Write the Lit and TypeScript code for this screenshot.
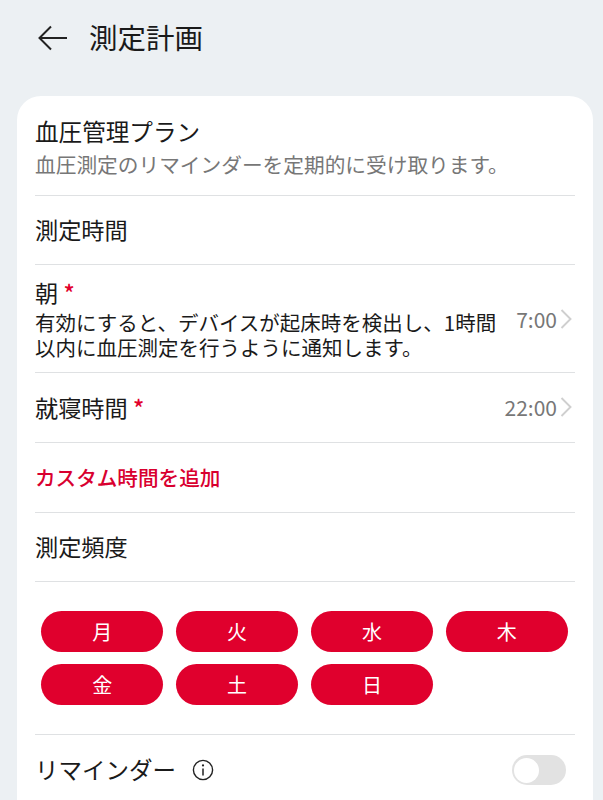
import { LitElement, html, css } from "lit";
import { customElement } from "lit/decorators.js";

const chevron = html`<svg class="chev" viewBox="0 0 12 20" aria-hidden="true"><path d="M1.5 1 L10.5 10 L1.5 19" fill="none" stroke="#cfcfcf" stroke-width="1.9"/></svg>`;

@customElement("app-root")
export class AppRoot extends LitElement {
  static styles = css`
    :host {
      display: block;
      width: 603px;
      height: 800px;
      overflow: hidden;
      background: #ecf0f3;
      font-family: "Noto Sans CJK JP", "Noto Sans", sans-serif;
      color: #1a1a1a;
    }
    .head {
      display: flex;
      align-items: center;
      box-sizing: border-box;
      height: 76px;
      padding: 0 0 1px 38px;
      gap: 21px;
      font-size: 28.5px;
      line-height: 38px;
    }
    .head span { margin-bottom: 1px; }
    .back { width: 30px; height: 26px; display: block; }
    .card {
      margin: 20px 10px 0 17px;
      padding: 0 18px;
      height: 730px;
      background: #fff;
      border-radius: 24px;
    }
    .row {
      display: flex;
      align-items: center;
      box-sizing: border-box;
      height: 70px;
      padding-bottom: 2px;
      border-bottom: 1px solid #dfe1e3;
      font-size: 23.2px;
    }
    .plan { height: 100px; display: block; padding: 20px 0 0; }
    .plan .t { font-size: 23.6px; }
    .t { line-height: 30px; }
    .sub { font-size: 20.7px; line-height: 26px; color: #777; margin-top: 5px; white-space: nowrap; }
    .short { height: 69px; }
    .morning { height: 108px; padding-bottom: 0; }
    .freq { height: 69px; padding-bottom: 3px; }
    .grow { flex: 1; min-width: 0; }
    .star { color: #e2002c; font-weight: 500; }
    .desc { font-size: 20.5px; line-height: 25px; margin-top: 3px; }
    .time { font-size: 21px; color: #777; margin-left: 12px; white-space: nowrap; }
    .chev { width: 12px; height: 20px; margin: 0 3px; flex: none; }
    .add { color: #d9002f; font-size: 20.6px; font-weight: 500; }
    .days {
      display: grid;
      grid-template-columns: repeat(4, 122.3px);
      column-gap: 12.6px;
      row-gap: 12px;
      padding: 29px 6px;
      border-bottom: 1px solid #dfe1e3;
    }
    .pill {
      height: 41px;
      border-radius: 21px;
      background: #e0002d;
      color: #fff;
      font-size: 20px;
      display: flex;
      align-items: center;
      justify-content: center;
    }
    .rem { height: 70px; display: flex; align-items: center; font-size: 23.5px; }
    .rem span { margin-bottom: 2px; }
    .info { width: 22px; height: 22px; margin-left: 16px; display: block; }
    .toggle {
      margin-left: auto;
      margin-right: 9px;
      width: 54px;
      height: 30px;
      border-radius: 15px;
      background: #e2e2e2;
      display: flex;
      align-items: center;
      padding-left: 2px;
      box-sizing: border-box;
    }
    .knob { width: 25px; height: 25px; border-radius: 50%; background: #fff; }
  `;

  render() {
    const days = ["月", "火", "水", "木", "金", "土", "日"];
    return html`
      <div class="head">
        <svg class="back" viewBox="0 0 30 26" aria-hidden="true">
          <path d="M29 13 H2 M13 1.5 L1.5 13 L13 24.5" fill="none" stroke="#222" stroke-width="2"/>
        </svg>
        <span>測定計画</span>
      </div>
      <div class="card">
        <div class="row plan">
          <div class="t">血圧管理プラン</div>
          <div class="sub">血圧測定のリマインダーを定期的に受け取ります。</div>
        </div>
        <div class="row short">測定時間</div>
        <div class="row morning">
          <div class="grow">
            <div class="t">朝 <span class="star">*</span></div>
            <div class="desc">有効にすると、デバイスが起床時を検出し、1時間以内に血圧測定を行うように通知します。</div>
          </div>
          <span class="time">7:00</span>${chevron}
        </div>
        <div class="row">
          <div class="grow">就寝時間 <span class="star">*</span></div>
          <span class="time">22:00</span>${chevron}
        </div>
        <div class="row add">カスタム時間を追加</div>
        <div class="row freq">測定頻度</div>
        <div class="days">
          ${days.map((d) => html`<div class="pill">${d}</div>`)}
        </div>
        <div class="rem">
          <span>リマインダー</span>
          <svg class="info" viewBox="0 0 22 22" aria-hidden="true">
            <circle cx="11" cy="11" r="9.6" fill="none" stroke="#222" stroke-width="1.4"/>
            <path d="M11 9.5 V16.5" stroke="#222" stroke-width="1.5"/>
            <circle cx="11" cy="6.4" r="1.1" fill="#222"/>
          </svg>
          <div class="toggle"><div class="knob"></div></div>
        </div>
      </div>
    `;
  }
}
